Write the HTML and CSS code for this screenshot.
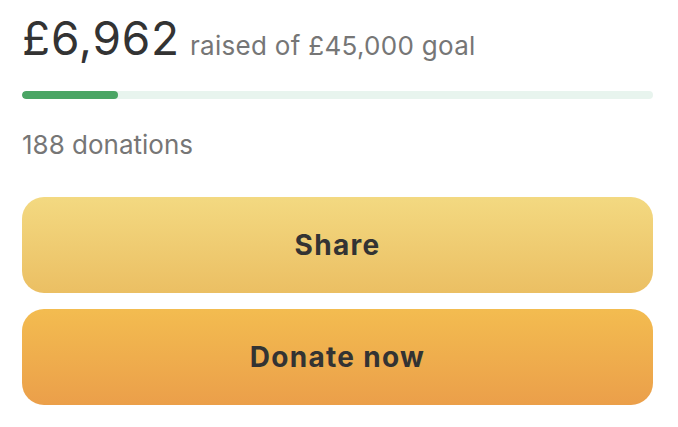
FILE: index.html
```html
<!DOCTYPE html>
<html>
<head>
<meta charset="utf-8">
<link rel="stylesheet" href="styles.css">
</head>
<body>
<div class="card">
  <div class="amount-line">
    <span class="amount">£6,962</span>
    <span class="goal">raised of £45,000 goal</span>
  </div>
  <div class="track"><div class="fill" style="width: 15.2%"></div></div>
  <div class="count">188 donations</div>
  <button class="btn share">Share</button>
  <button class="btn donate">Donate now</button>
</div>
</body>
</html>
```

FILE: styles.css
```css
html, body {
  margin: 0;
  padding: 0;
  background: #ffffff;
}
body {
  font-family: "Inter", "Noto Sans", sans-serif;
  color: #333333;
}
.card {
  padding: 10px 25px 0 22px;
  display: flex;
  flex-direction: column;
}
.amount-line {
  display: flex;
  align-items: baseline;
  gap: 10px;
  height: 56px;
  line-height: 56px;
}
.amount {
  font-size: 46px;
  letter-spacing: 0.8px;
  color: #333333;
}
.goal {
  font-size: 26px;
  letter-spacing: 0.3px;
  color: #767676;
}
.track {
  margin-top: 25px;
  height: 8px;
  border-radius: 4px;
  background: #e8f4ee;
  overflow: hidden;
}
.fill {
  height: 100%;
  background: #4aa564;
  border-radius: 4px;
}
.count {
  margin-top: 31px;
  font-size: 26px;
  line-height: 30px;
  color: #767676;
}
.btn {
  border: 0;
  border-radius: 22px;
  height: 96px;
  font-family: inherit;
  font-weight: 700;
  font-size: 28px;
  letter-spacing: 1.3px;
  color: #333333;
  cursor: pointer;
}
.share {
  margin-top: 37px;
  background: linear-gradient(to bottom, #f3d981, #ebbf63);
}
.donate {
  margin-top: 16px;
  background: linear-gradient(to bottom, #f3bc50, #eb9f4a);
}
```
